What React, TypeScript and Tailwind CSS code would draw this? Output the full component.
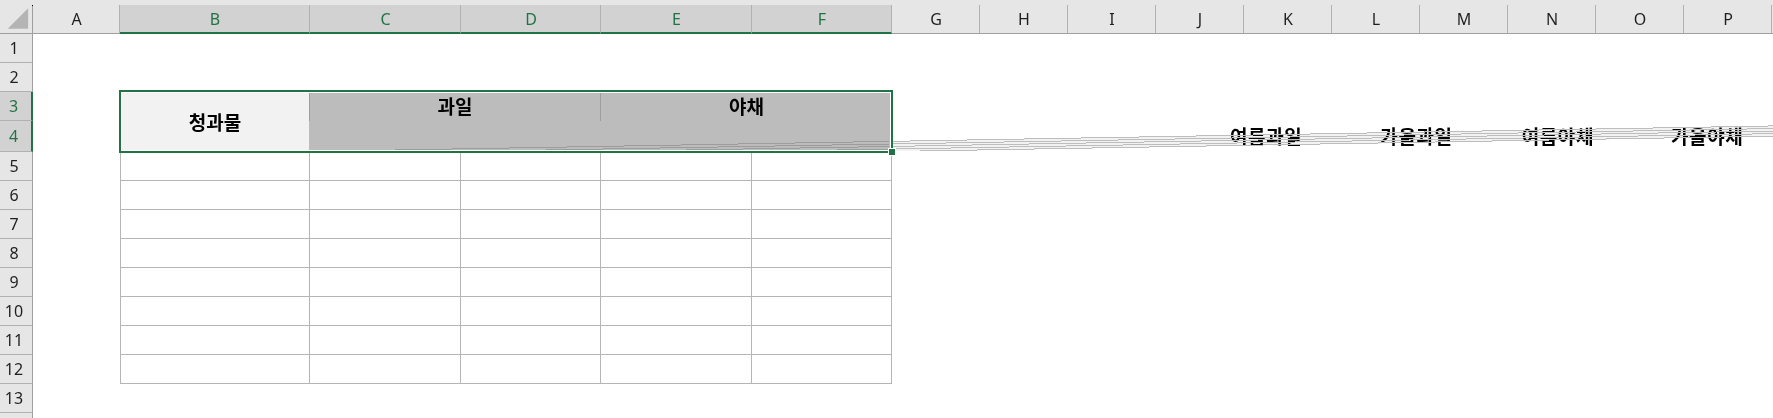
const cols = ['A', 'B', 'C', 'D', 'E', 'F', 'G', 'H', 'I', 'J', 'K', 'L', 'M', 'N', 'O', 'P']
const selectedCols = ['B', 'C', 'D', 'E', 'F']
const dataRows = [5, 6, 7, 8, 9, 10, 11, 12]
const STEP = 57.2

// [start x, start y] of each smeared line
const smearLines = [
  [395, 149],
  [546, 149],
  [686, 149],
  [837, 149],
  [920, 150],
]

function stairs(startX: number, startY: number, from: number, to: number) {
  let d = ''
  for (let i = 0; ; i++) {
    const x1 = Math.round(startX + i * STEP)
    const x2 = Math.round(startX + (i + 1) * STEP)
    if (x1 >= to) break
    if (x2 <= from) continue
    const y = startY - i + 0.5
    d += `M${Math.max(x1, from)} ${y}H${Math.min(x2, to)}`
  }
  return d
}

function smearBand() {
  // light band between the top and the bottom smeared line, right of the selection
  const top: string[] = []
  const bottom: string[] = []
  for (let x = 893; x < 1773; x += 4) {
    const t = 149 - Math.floor((x - 395) / STEP)
    const b = x < 920 ? 151 : 151 - Math.floor((x - 920) / STEP)
    top.push(`${x},${t}`, `${x + 4},${t}`)
    bottom.unshift(`${x + 4},${b}`, `${x},${b}`)
  }
  return [...top, ...bottom].join(' ')
}

function RowHeader({ n, selected }: { n: number; selected?: boolean }) {
  return (
    <div
      className={`flex items-center justify-center border-b border-[#b1b1b1] pr-[4px] text-[16px] ${
        selected
          ? 'border-r-2 border-r-[#217346] bg-[#d2d2d2] text-[#217346]'
          : 'border-r border-r-[#9f9f9f] bg-[#e6e6e6] text-[#1f1f1f]'
      }`}
    >
      {n}
    </div>
  )
}

export default function App() {
  return (
    <div className="relative h-[418px] w-[1773px] overflow-hidden bg-white font-['Noto_Sans',sans-serif]">
      <div className="h-[5px] bg-[#e6e6e6]" />
      <div className="grid grid-cols-[33px_87px_190px_151px_140px_151px_140px_repeat(10,88px)_1px] grid-rows-[29px_29px_29px_29px_31px_repeat(9,29px)_5px]">
        {/* column headers */}
        <div className="flex items-center justify-center border-r border-b border-[#9f9f9f] bg-[#e6e6e6]">
          <svg width="33" height="29" viewBox="0 0 33 29" className="-mt-px">
            <polygon points="8,25 29,4 29,25" fill="#b4b4b4" />
          </svg>
        </div>
        {cols.map((c) => {
          const sel = selectedCols.includes(c)
          return (
            <div
              key={c}
              className={`flex items-center justify-center border-r border-r-[#b1b1b1] pl-px text-[16px] ${
                sel
                  ? 'border-b-2 border-b-[#217346] bg-[#d2d2d2] text-[#217346]'
                  : 'border-b border-b-[#9f9f9f] bg-[#e6e6e6] text-[#1f1f1f]'
              }`}
            >
              {c}
            </div>
          )
        })}
        <div className="border-b border-[#9f9f9f] bg-[#e6e6e6]" />

        {/* rows 1, 2 */}
        <RowHeader n={1} />
        <div className="col-span-17" />
        <RowHeader n={2} />
        <div className="col-span-17" />

        {/* rows 3, 4 */}
        <RowHeader n={3} selected />
        <div />
        <div className="row-span-2 flex items-center justify-center bg-[#f2f2f2] pt-px font-['Noto_Sans_CJK_KR',sans-serif] text-[19px] font-bold text-black">
          청과물
        </div>
        <div className="col-span-2 -ml-px flex items-center justify-center border-x border-x-[#9e9e9e] bg-[#bcbcbc] font-['Noto_Sans_CJK_KR',sans-serif] text-[19px] font-bold text-black">
          과일
        </div>
        <div className="col-span-2 flex items-center justify-center bg-[#bcbcbc] font-['Noto_Sans_CJK_KR',sans-serif] text-[19px] font-bold text-black">
          야채
        </div>
        <div className="col-span-11" />

        <RowHeader n={4} selected />
        <div />
        <div className="col-span-4 -ml-px bg-[#bcbcbc]" />
        <div className="col-span-11 flex items-center pb-px pl-[338px] font-['Noto_Sans_CJK_KR',sans-serif] text-[19px] font-bold tracking-[0.6px] whitespace-nowrap text-black">
          <span>여름과일</span>
          <span className="ml-[78px]">가을과일</span>
          <span className="ml-[69px]">여름야채</span>
          <span className="ml-[77px]">가을야채</span>
        </div>

        {/* empty table body */}
        {dataRows.map((n) => (
          <div key={n} className="contents">
            <RowHeader n={n} />
            <div />
            <div className="border-x border-b border-[#b5b5b5]" />
            <div className="border-r border-b border-[#b5b5b5]" />
            <div className="border-r border-b border-[#b5b5b5]" />
            <div className="border-r border-b border-[#b5b5b5]" />
            <div className="border-r border-b border-[#b5b5b5]" />
            <div className="col-span-11" />
          </div>
        ))}

        <RowHeader n={13} />
        <div className="col-span-17" />
        <div className="border-r border-[#9f9f9f] bg-[#e6e6e6]" />
        <div className="col-span-17" />
      </div>

      {/* smeared render lines */}
      <svg width="1773" height="418" className="pointer-events-none absolute inset-0" shapeRendering="crispEdges">
        <polygon points={smearBand()} fill="#f2f2f2" className="mix-blend-multiply" />
        {smearLines.map(([x, y]) => (
          <g key={x} fill="none">
            <path d={stairs(x, y, 0, 889)} stroke="#9c9c9c" />
            <path d={stairs(x, y, 893, 1773)} stroke="#bdbdbd" />
          </g>
        ))}
      </svg>

      {/* selection */}
      <div className="absolute top-[90px] left-[119px] h-[63px] w-[774px] border-2 border-[#217346]">
        <div className="h-full w-full border border-white" />
      </div>
      <div className="absolute top-[148px] left-[888px] h-[8px] w-[8px] border border-white bg-[#217346]" />
      <div className="absolute top-[5px] left-[32px] h-px w-px bg-black" />
    </div>
  )
}
